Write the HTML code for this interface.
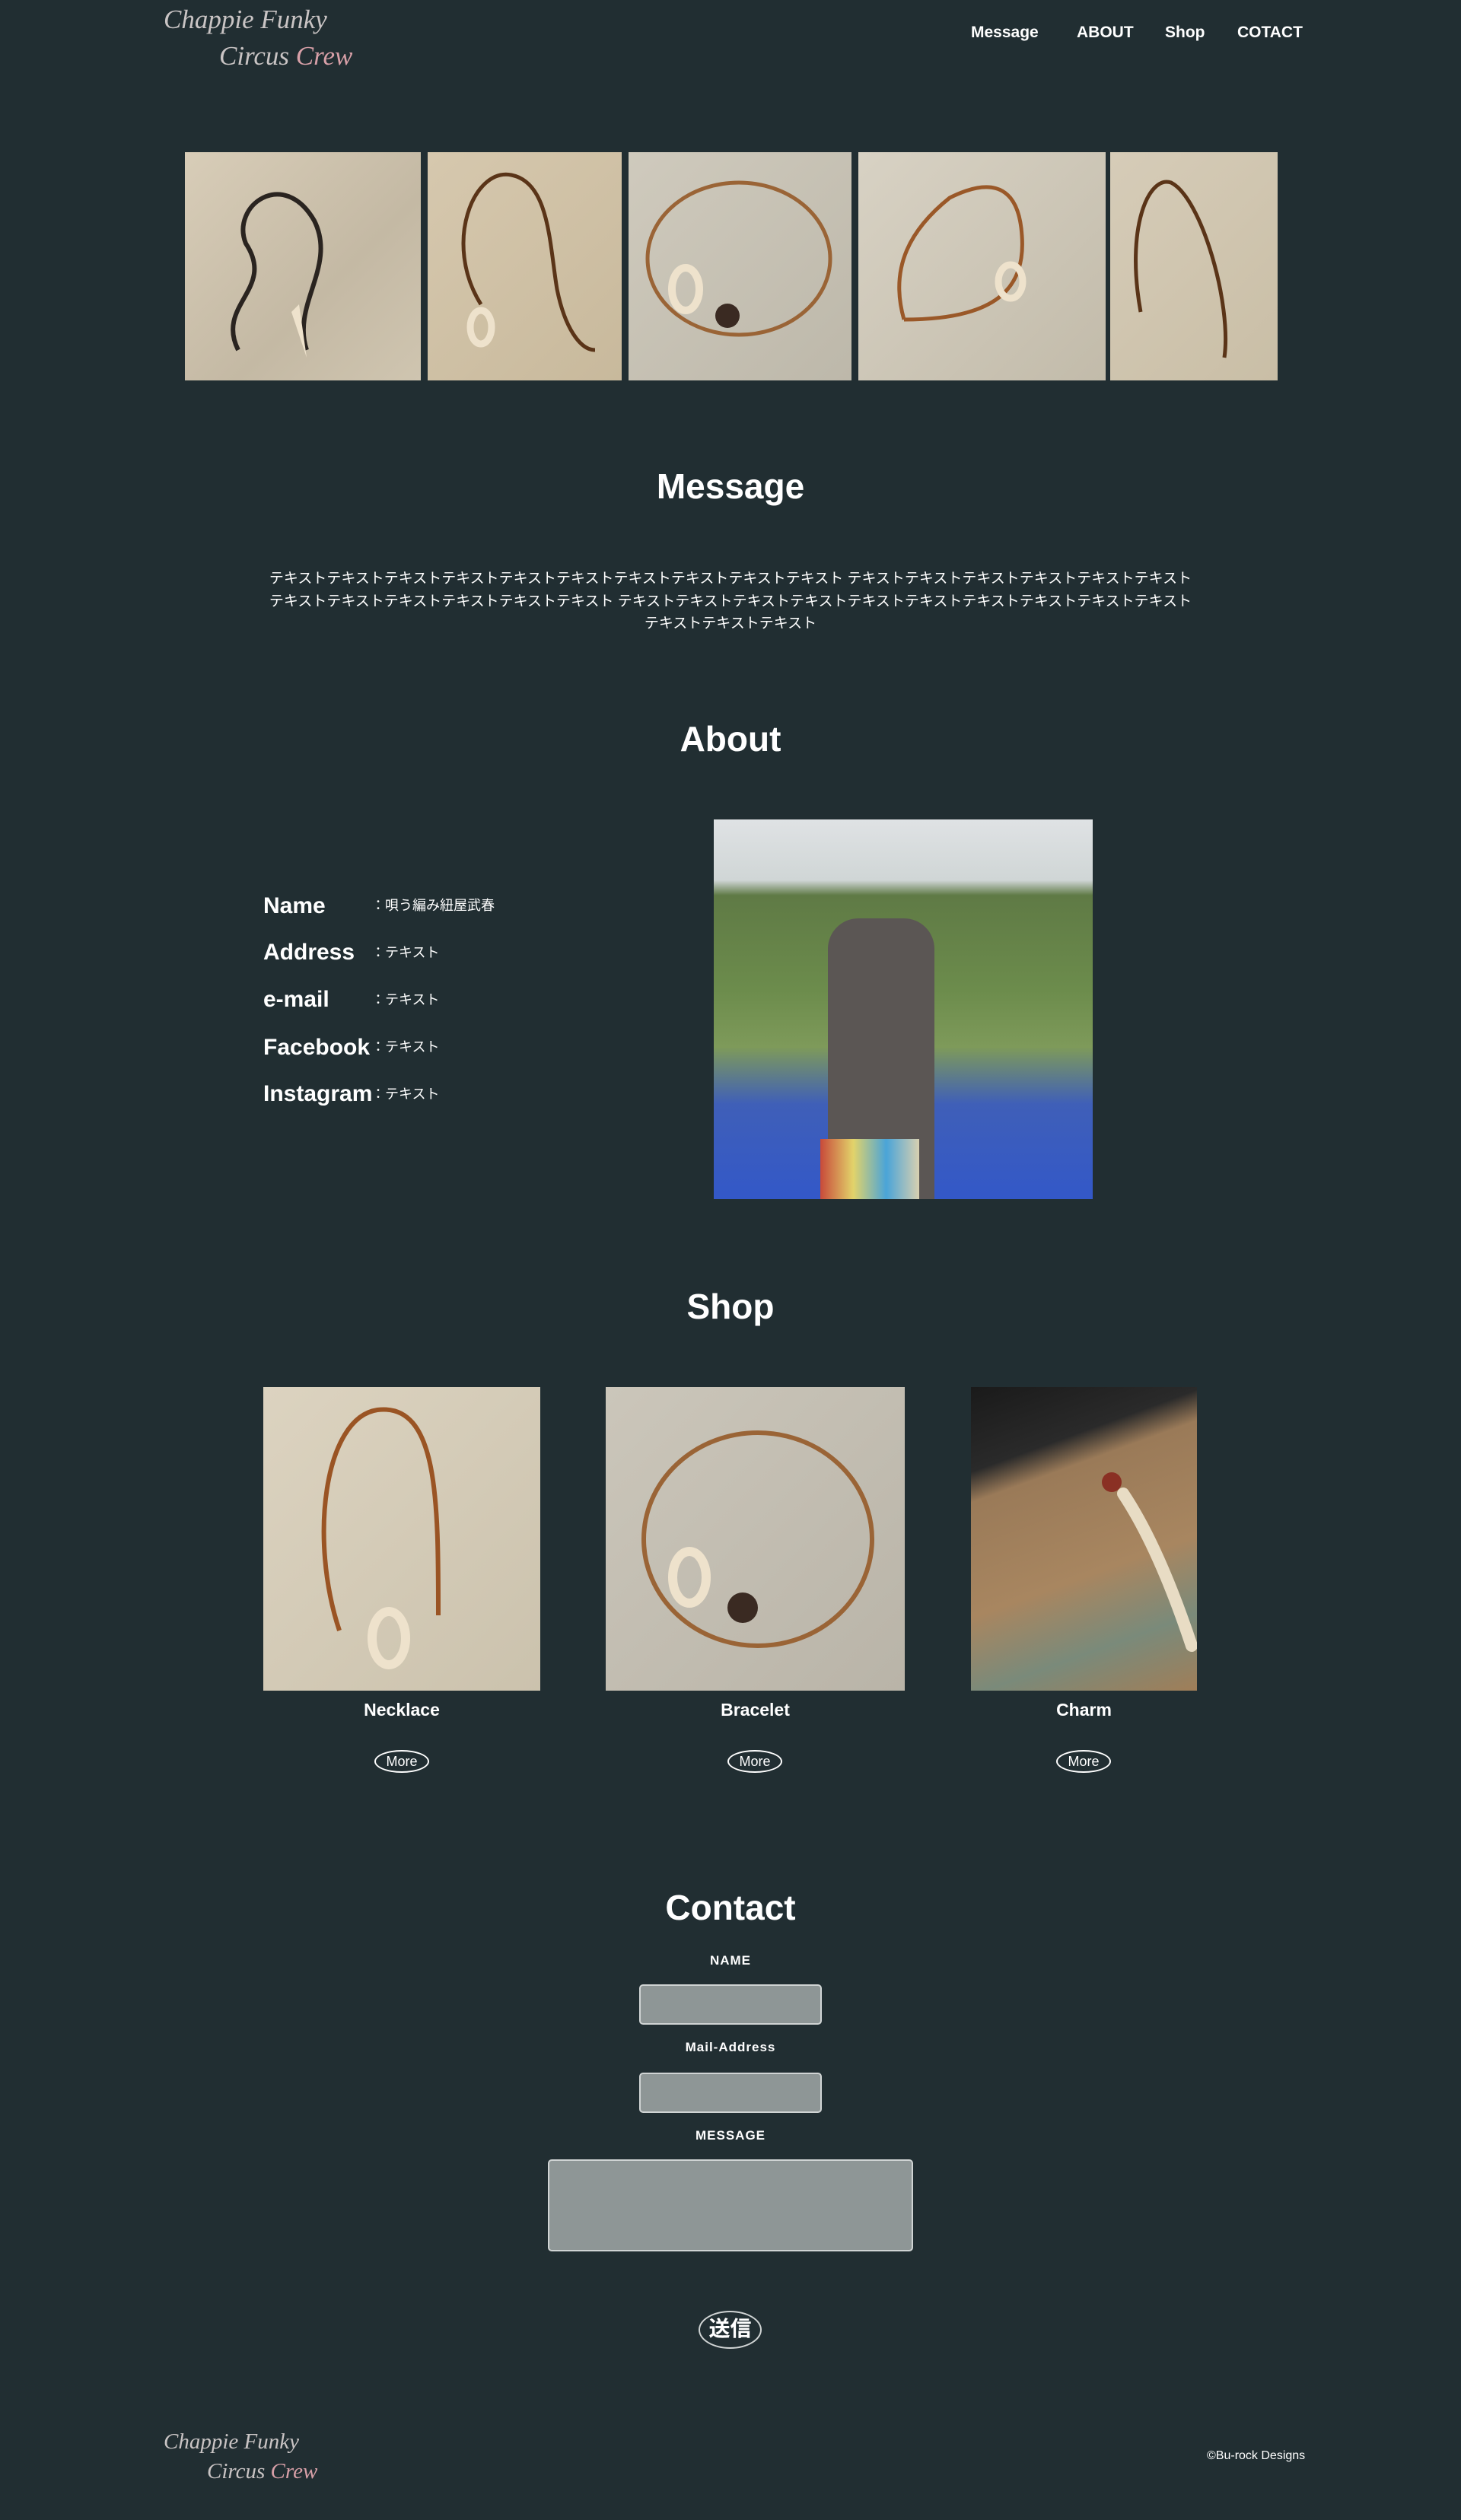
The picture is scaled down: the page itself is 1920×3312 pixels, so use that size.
<!DOCTYPE html>
<html><head><meta charset="utf-8"><style>
*{margin:0;padding:0;box-sizing:border-box}
body{width:1920px;height:3312px;background:#212e32;position:relative;overflow:hidden;font-family:"Liberation Sans","Noto Sans CJK JP",sans-serif;color:#fff}
.a{position:absolute}
.logo{font-family:"Liberation Serif",serif;color:#c9c4c4;font-size:35px;font-style:italic;line-height:1}
.nav{top:31px;font-weight:bold;font-size:21px}
.h{left:0;width:1920px;text-align:center;font-weight:bold;font-size:46px;line-height:1}
.img{background:linear-gradient(135deg,#d8cdb8,#c4b9a4 60%,#cfc5b0)}
.img svg{position:absolute;left:0;top:0;width:100%;height:100%}
.lbl{left:346px;font-weight:bold;font-size:30px;line-height:1}
.val{left:488px;font-size:18px;line-height:1}
.more{width:72px;height:30px;border:2px solid #fff;border-radius:50%;text-align:center;font-size:18px;line-height:26px}
.fl{left:0;width:1920px;text-align:center;font-weight:bold;font-size:17px;letter-spacing:1px}
.in{background:#8e9696;border:2px solid #d0d4d4;border-radius:5px}
</style></head><body>
<div class="a logo" style="left:215px;top:8px">Chappie Funky</div>
<div class="a logo" style="left:288px;top:56px">Circus <span style="color:#d8a0a8">Crew</span></div>
<div class="a nav" style="left:1276px">Message</div>
<div class="a nav" style="left:1415px">ABOUT</div>
<div class="a nav" style="left:1531px">Shop</div>
<div class="a nav" style="left:1626px">COTACT</div>

<div class="a img" style="left:243px;top:200px;width:310px;height:300px"><svg viewBox="0 0 310 300"><path d="M70 260 C40 200 120 180 80 120 C60 70 130 20 170 90 C200 150 140 200 160 260" fill="none" stroke="#2a2420" stroke-width="6"/><path d="M150 200 l10 70 l-20 -60z" fill="#eee2cc"/></svg></div>
<div class="a img" style="left:562px;top:200px;width:255px;height:300px;background:linear-gradient(135deg,#d6c8ae,#c8b99c)"><svg viewBox="0 0 255 300"><path d="M70 200 C20 120 60 20 110 30 C160 40 160 120 170 180 C180 230 200 260 220 260" fill="none" stroke="#5a3418" stroke-width="5"/><ellipse cx="70" cy="230" rx="14" ry="22" fill="none" stroke="#eee2cc" stroke-width="9"/></svg></div>
<div class="a img" style="left:826px;top:200px;width:293px;height:300px;background:linear-gradient(135deg,#cfcabd,#bdb8aa)"><svg viewBox="0 0 293 300"><ellipse cx="145" cy="140" rx="120" ry="100" fill="none" stroke="#9a6436" stroke-width="5"/><ellipse cx="75" cy="180" rx="18" ry="28" fill="none" stroke="#eee2cc" stroke-width="10"/><circle cx="130" cy="215" r="16" fill="#3a2a22"/></svg></div>
<div class="a img" style="left:1128px;top:200px;width:325px;height:300px;background:linear-gradient(135deg,#d8d2c4,#c2bbaa)"><svg viewBox="0 0 325 300"><path d="M60 220 C40 150 70 100 120 60 C160 40 210 30 215 110 C220 180 180 220 60 220" fill="none" stroke="#9a5828" stroke-width="5"/><ellipse cx="200" cy="170" rx="16" ry="22" fill="none" stroke="#eee2cc" stroke-width="9"/></svg></div>
<div class="a img" style="left:1459px;top:200px;width:220px;height:300px;background:linear-gradient(135deg,#d6ccb8,#c9bea6)"><svg viewBox="0 0 220 300"><path d="M40 210 C20 100 50 30 80 40 C120 60 160 200 150 270" fill="none" stroke="#5a3418" stroke-width="5"/></svg></div>

<div class="a h" style="top:616px">Message</div>
<div class="a" style="left:351px;top:746px;width:1218px;text-align:center;font-size:19px;line-height:29.5px">テキストテキストテキストテキストテキストテキストテキストテキストテキストテキスト テキストテキストテキストテキストテキストテキストテキストテキストテキストテキストテキストテキスト テキストテキストテキストテキストテキストテキストテキストテキストテキストテキストテキストテキストテキスト</div>

<div class="a h" style="top:948px">About</div>
<div class="a lbl" style="top:1176px">Name</div><div class="a val" style="top:1181px">：唄う編み紐屋武春</div>
<div class="a lbl" style="top:1237px">Address</div><div class="a val" style="top:1243px">：テキスト</div>
<div class="a lbl" style="top:1299px">e-mail</div><div class="a val" style="top:1305px">：テキスト</div>
<div class="a lbl" style="top:1362px">Facebook</div><div class="a val" style="top:1367px">：テキスト</div>
<div class="a lbl" style="top:1423px">Instagram</div><div class="a val" style="top:1429px">：テキスト</div>
<div class="a" style="left:938px;top:1077px;width:498px;height:499px;background:linear-gradient(180deg,#dfe2e4 0%,#d0d6d6 16%,#5f7a45 20%,#6c8c4c 45%,#7e9a5a 60%,#3f5fb8 75%,#3358c8 100%)">
<div class="a" style="left:150px;top:130px;width:140px;height:369px;background:#5b5654;border-radius:40px 40px 0 0"></div>
<div class="a" style="left:140px;top:420px;width:130px;height:79px;background:linear-gradient(90deg,#c84a3a,#e2d36a,#4aa4d8,#d8d0b0)"></div>
</div>

<div class="a h" style="top:1694px">Shop</div>
<div class="a img" style="left:346px;top:1823px;width:364px;height:399px;background:linear-gradient(135deg,#dcd3c0,#cbc2ad)"><svg viewBox="0 0 364 399"><path d="M100 320 C60 200 80 40 150 30 C230 20 230 150 230 300" fill="none" stroke="#9a5424" stroke-width="6"/><ellipse cx="165" cy="330" rx="22" ry="35" fill="none" stroke="#eee2cc" stroke-width="12"/></svg></div>
<div class="a img" style="left:796px;top:1823px;width:393px;height:399px;background:linear-gradient(135deg,#cbc6ba,#b9b4a8)"><svg viewBox="0 0 393 399"><ellipse cx="200" cy="200" rx="150" ry="140" fill="none" stroke="#9a6436" stroke-width="6"/><ellipse cx="110" cy="250" rx="22" ry="34" fill="none" stroke="#eee2cc" stroke-width="12"/><circle cx="180" cy="290" r="20" fill="#3a2a22"/></svg></div>
<div class="a img" style="left:1276px;top:1823px;width:297px;height:399px;background:linear-gradient(160deg,#1a1a1a 0%,#2a2a2a 22%,#9a7a58 30%,#a88660 60%,#7a8a7a 80%,#a07e58 100%)"><svg viewBox="0 0 297 399"><path d="M200 140 C240 200 270 280 290 340" fill="none" stroke="#e8dcc4" stroke-width="16" stroke-linecap="round"/><circle cx="185" cy="125" r="13" fill="#8a3024"/></svg></div>
<div class="a" style="left:346px;top:2234px;width:364px;text-align:center;font-weight:bold;font-size:23px">Necklace</div>
<div class="a" style="left:796px;top:2234px;width:393px;text-align:center;font-weight:bold;font-size:23px">Bracelet</div>
<div class="a" style="left:1276px;top:2234px;width:297px;text-align:center;font-weight:bold;font-size:23px">Charm</div>
<div class="a more" style="left:492px;top:2300px">More</div>
<div class="a more" style="left:956px;top:2300px">More</div>
<div class="a more" style="left:1388px;top:2300px">More</div>

<div class="a h" style="top:2484px">Contact</div>
<div class="a fl" style="top:2567px">NAME</div>
<div class="a in" style="left:840px;top:2608px;width:240px;height:53px"></div>
<div class="a fl" style="top:2681px">Mail-Address</div>
<div class="a in" style="left:840px;top:2724px;width:240px;height:53px"></div>
<div class="a fl" style="top:2797px">MESSAGE</div>
<div class="a in" style="left:720px;top:2838px;width:480px;height:121px"></div>
<div class="a" style="left:918px;top:3037px;width:83px;height:50px;border:2px solid #d0d4d4;border-radius:50%;text-align:center;font-weight:bold;font-size:28px;line-height:44px">送信</div>

<div class="a logo" style="left:215px;top:3195px;font-size:29px">Chappie Funky</div>
<div class="a logo" style="left:272px;top:3234px;font-size:29px">Circus <span style="color:#d8a0a8">Crew</span></div>
<div class="a" style="left:1586px;top:3219px;font-size:16px">©Bu-rock Designs</div>
</body></html>
